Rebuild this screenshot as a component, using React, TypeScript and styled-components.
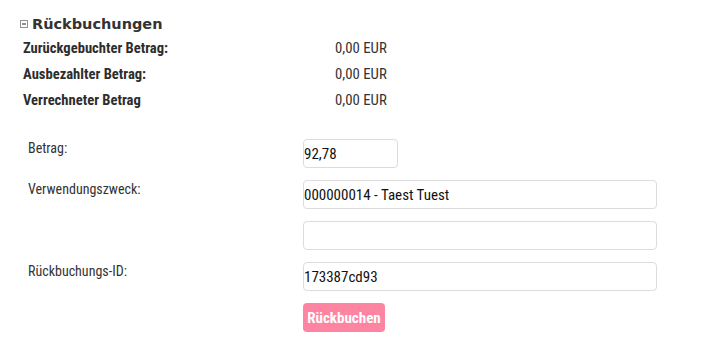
import React from 'react';
import styled, { createGlobalStyle } from 'styled-components';

const GlobalStyle = createGlobalStyle`
  body {
    margin: 0;
    background: #ffffff;
    font-family: Roboto, "Liberation Sans", sans-serif;
    font-stretch: condensed;
    color: #333333;
  }
`;

const Page = styled.div`
  padding: 12px 0 0 20px;
  width: 703px;
  height: 351px;
  box-sizing: border-box;
`;

const TitleRow = styled.div`
  display: flex;
  align-items: center;
  gap: 4px;
  height: 22px;
`;

const Title = styled.h2`
  margin: 0;
  font-family: "DejaVu Sans", "Liberation Sans", sans-serif;
  font-stretch: normal;
  font-weight: bold;
  font-size: 14.5px;
  color: #333333;
  padding-top: 2px;
`;

const ToggleIcon = styled.svg`
  width: 8px;
  height: 8px;
  margin-top: 2px;
`;

const Summary = styled.div`
  display: grid;
  grid-template-columns: 312px auto;
  grid-auto-rows: 26px;
  align-items: center;
  padding: 1px 0 0 3px;
`;

const SummaryLabel = styled.div`
  font-weight: bold;
  font-size: 14.6px;
  color: #2d2d2d;
`;

const SummaryValue = styled.div`
  font-size: 14.8px;
  color: #333333;
`;

const Form = styled.form`
  display: grid;
  grid-template-columns: 275px 354px;
  row-gap: 12px;
  margin-top: 26px;
  padding-left: 8px;
`;

const FieldLabel = styled.label`
  font-size: 14px;
  color: #333333;
  padding-top: 1px;
`;

const Input = styled.input<{ $short?: boolean }>`
  box-sizing: border-box;
  width: ${(p) => (p.$short ? '95px' : '354px')};
  height: 29px;
  border: 1px solid #dcdcdc;
  border-radius: 4px;
  padding: 0;
  font-family: Roboto, "Liberation Sans", sans-serif;
  font-stretch: condensed;
  font-size: 15px;
  color: #111111;
  background: #ffffff;
  outline: none;
`;

const Button = styled.button`
  width: 82px;
  height: 29px;
  border: none;
  border-radius: 4px;
  background: #fd85a2;
  color: #ffffff;
  font-family: Roboto, "Liberation Sans", sans-serif;
  font-stretch: condensed;
  font-weight: bold;
  font-size: 15px;
  padding: 0;
  cursor: pointer;
`;

const summary = [
  { label: 'Zurückgebuchter Betrag:', value: '0,00 EUR' },
  { label: 'Ausbezahlter Betrag:', value: '0,00 EUR' },
  { label: 'Verrechneter Betrag', value: '0,00 EUR' },
];

export default function App() {
  return (
    <Page>
      <GlobalStyle />
      <TitleRow>
        <ToggleIcon viewBox="0 0 8 8">
          <rect x="0.5" y="0.5" width="7" height="7" fill="none" stroke="#222" strokeWidth="1" strokeDasharray="1 1" />
          <line x1="2" y1="4" x2="6" y2="4" stroke="#222" strokeWidth="1" />
        </ToggleIcon>
        <Title>Rückbuchungen</Title>
      </TitleRow>
      <Summary>
        {summary.map((s) => (
          <React.Fragment key={s.label}>
            <SummaryLabel>{s.label}</SummaryLabel>
            <SummaryValue>{s.value}</SummaryValue>
          </React.Fragment>
        ))}
      </Summary>
      <Form onSubmit={(e) => e.preventDefault()}>
        <FieldLabel>Betrag:</FieldLabel>
        <Input $short defaultValue="92,78" />
        <FieldLabel>Verwendungszweck:</FieldLabel>
        <Input defaultValue="000000014 - Taest Tuest" />
        <span />
        <Input defaultValue="" />
        <FieldLabel>Rückbuchungs-ID:</FieldLabel>
        <Input defaultValue="173387cd93" />
        <span />
        <div>
          <Button type="submit">Rückbuchen</Button>
        </div>
      </Form>
    </Page>
  );
}
